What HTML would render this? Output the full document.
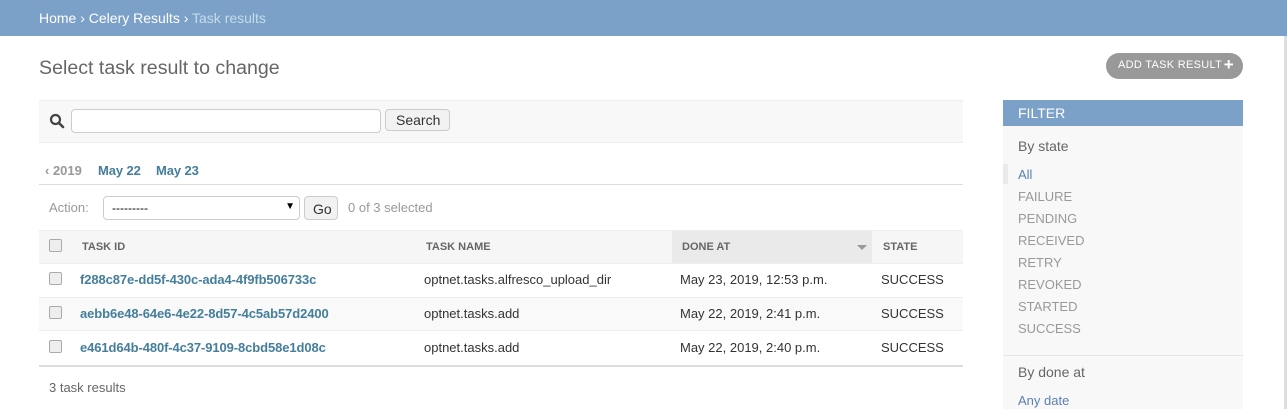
<!DOCTYPE html>
<html><head><style>
*{box-sizing:border-box}
body{margin:0;width:1287px;height:409px;overflow:hidden;background:#fff;font-family:"Liberation Sans",sans-serif;color:#333;position:relative;font-size:13px}
.a{position:absolute;white-space:nowrap}
.hdr{left:0;top:0;width:1287px;height:36px;background:#7ca1c8}
.lnk{color:#447e9b;font-weight:bold;letter-spacing:-.1px}
.th{font-size:11px;font-weight:bold;color:#666}
.cb{width:13px;height:13px;border:1px solid #aaa;border-radius:2px;background:#eee}
.fi{font-size:13px;color:#999}
</style></head><body>
<div class="a hdr"></div>
<div class="a" style="left:39px;top:10px;font-size:14px;color:#fff">Home › Celery Results › <span style="color:#c4dce8">Task results</span></div>
<div class="a" style="left:39px;top:57px;font-size:19.6px;color:#666;font-weight:300">Select task result to change</div>
<div class="a" style="left:1106px;top:53px;width:137px;height:26px;border-radius:13px;background:#999;color:#fff;font-size:11px;padding:6px 0 0 12px;letter-spacing:.3px">ADD TASK RESULT <b style="font-size:17px;position:absolute;top:2px;right:9px">+</b></div>
<div class="a" style="left:1284px;top:36px;width:3px;height:373px;background:#ddd"></div>

<div class="a" style="left:39px;top:100px;width:924px;height:43px;background:#f8f8f8;border-top:1px solid #eee;border-bottom:1px solid #eee"></div>
<svg class="a" style="left:49px;top:113px" width="16" height="16" viewBox="0 0 16 16"><circle cx="6.5" cy="6.5" r="4.5" fill="none" stroke="#444" stroke-width="2.2"/><path d="M10 10 L14 14" stroke="#444" stroke-width="2.6" stroke-linecap="round"/></svg>
<div class="a" style="left:71px;top:109px;width:310px;height:24px;border:1px solid #ccc;border-radius:4px;background:#fff"></div>
<div class="a" style="left:385px;top:109px;width:65px;height:22px;border:1px solid #ccc;border-radius:4px;background:#f2f2f2;font-size:14px;padding:2px 0 0 10px;color:#333">Search</div>

<div class="a" style="left:45px;top:163px;font-size:13px;font-weight:bold;color:#999">‹ 2019</div>
<div class="a lnk" style="left:98px;top:163px">May 22</div>
<div class="a lnk" style="left:156px;top:163px">May 23</div>
<div class="a" style="left:39px;top:184px;width:924px;height:1px;background:#ddd"></div>

<div class="a" style="left:49px;top:200px;color:#999">Action:</div>
<div class="a" style="left:103px;top:196px;width:197px;height:24px;border:1px solid #ccc;border-radius:4px;background:#fff;font-size:12px;padding:4px 0 0 8px;color:#000">---------<span style="position:absolute;right:4px;top:4px;font-size:10px">▼</span></div>
<div class="a" style="left:304px;top:196px;width:34px;height:24px;border:1px solid #ccc;border-radius:4px;background:#f2f2f2;font-size:14px;padding:4px 0 0 8px">Go</div>
<div class="a" style="left:348px;top:200px;color:#999">0 of 3 selected</div>

<div class="a" style="left:39px;top:230px;width:924px;height:34px;background:#f6f6f6;border-top:1px solid #eee;border-bottom:1px solid #eee"></div>
<div class="a" style="left:672px;top:231px;width:200px;height:32px;background:#eaeaea"></div>
<div class="a" style="left:857px;top:245px;width:0;height:0;border-left:5px solid transparent;border-right:5px solid transparent;border-top:5px solid #999"></div>
<div class="a cb" style="left:49px;top:239px"></div>
<div class="a th" style="left:82px;top:241px">TASK ID</div>
<div class="a th" style="left:426px;top:241px">TASK NAME</div>
<div class="a th" style="left:682px;top:241px">DONE AT</div>
<div class="a th" style="left:883px;top:241px">STATE</div>

<div class="a" style="left:39px;top:297px;width:924px;height:34px;background:#f9f9f9;border-top:1px solid #eee;border-bottom:1px solid #eee"></div>
<div class="a" style="left:39px;top:365px;width:924px;height:2px;background:#ddd"></div>

<div class="a cb" style="left:49px;top:272px"></div>
<div class="a lnk" style="left:80px;top:272px">f288c87e-dd5f-430c-ada4-4f9fb506733c</div>
<div class="a" style="left:424px;top:272px">optnet.tasks.alfresco_upload_dir</div>
<div class="a" style="left:680px;top:272px">May 23, 2019, 12:53 p.m.</div>
<div class="a" style="left:881px;top:272px">SUCCESS</div>

<div class="a cb" style="left:49px;top:306px"></div>
<div class="a lnk" style="left:80px;top:306px">aebb6e48-64e6-4e22-8d57-4c5ab57d2400</div>
<div class="a" style="left:424px;top:306px">optnet.tasks.add</div>
<div class="a" style="left:680px;top:306px">May 22, 2019, 2:41 p.m.</div>
<div class="a" style="left:881px;top:306px">SUCCESS</div>

<div class="a cb" style="left:49px;top:340px"></div>
<div class="a lnk" style="left:80px;top:340px">e461d64b-480f-4c37-9109-8cbd58e1d08c</div>
<div class="a" style="left:424px;top:340px">optnet.tasks.add</div>
<div class="a" style="left:680px;top:340px">May 22, 2019, 2:40 p.m.</div>
<div class="a" style="left:881px;top:340px">SUCCESS</div>

<div class="a" style="left:49px;top:380px;color:#666">3 task results</div>

<div class="a" style="left:1003px;top:100px;width:240px;height:309px;background:#f8f8f8"></div>
<div class="a" style="left:1003px;top:100px;width:240px;height:26px;background:#7ca1c8;color:#fff;font-size:14px;padding:5px 0 0 15px">FILTER</div>
<div class="a" style="left:1018px;top:138px;font-size:14px;color:#666">By state</div>
<div class="a" style="left:1003px;top:164px;width:5px;height:20px;background:#eaeaea"></div>
<div class="a" style="left:1018px;top:167px;color:#5b80b2">All</div>
<div class="a fi" style="left:1018px;top:189px">FAILURE</div>
<div class="a fi" style="left:1018px;top:211px">PENDING</div>
<div class="a fi" style="left:1018px;top:233px">RECEIVED</div>
<div class="a fi" style="left:1018px;top:255px">RETRY</div>
<div class="a fi" style="left:1018px;top:277px">REVOKED</div>
<div class="a fi" style="left:1018px;top:299px">STARTED</div>
<div class="a fi" style="left:1018px;top:321px">SUCCESS</div>
<div class="a" style="left:1003px;top:355px;width:240px;height:1px;background:#e6e6e6"></div>
<div class="a" style="left:1018px;top:364px;font-size:14px;color:#666">By done at</div>
<div class="a" style="left:1018px;top:393px;color:#5b80b2">Any date</div>
</body></html>
